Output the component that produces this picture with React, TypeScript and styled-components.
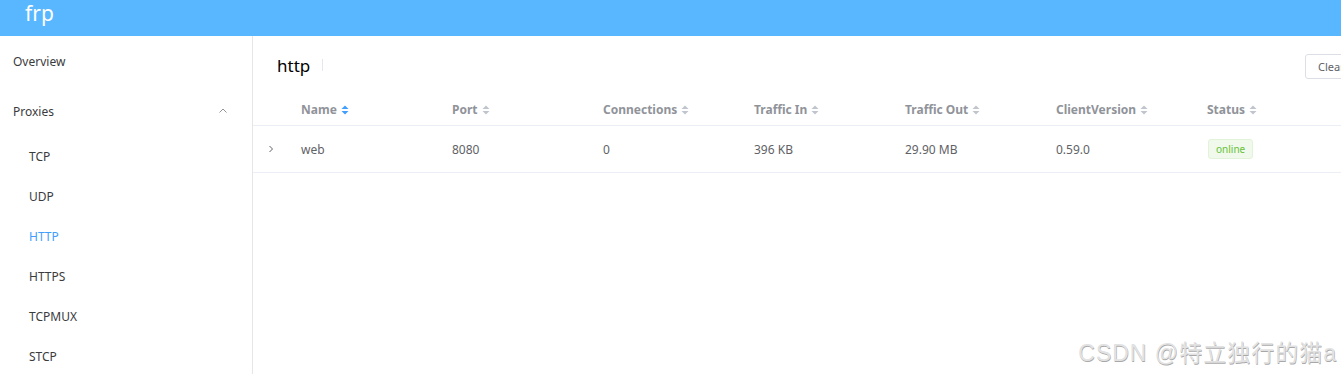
import React from 'react';
import styled, { createGlobalStyle } from 'styled-components';

const GlobalStyle = createGlobalStyle`
  html, body {
    margin: 0;
    padding: 0;
    background: #fff;
    font-family: 'Noto Sans', 'Noto Sans CJK SC', sans-serif;
    overflow: hidden;
  }
`;

const proxies = ['TCP', 'UDP', 'HTTP', 'HTTPS', 'TCPMUX', 'STCP'];

const columns = ['Name', 'Port', 'Connections', 'Traffic In', 'Traffic Out', 'ClientVersion', 'Status'];

const rows = [
  { name: 'web', port: '8080', conns: '0', trafficIn: '396 KB', trafficOut: '29.90 MB', version: '0.59.0', status: 'online' },
];

const SortIcon: React.FC<{ active?: boolean }> = ({ active }) => (
  <SortSvg width="8" height="10" viewBox="0 0 8 10">
    <path d="M4 0.5 L7.5 4 H0.5 Z" fill={active ? '#409eff' : '#c0c4cc'} />
    <path d="M4 9.5 L7.5 6 H0.5 Z" fill={active ? '#409eff' : '#c0c4cc'} />
  </SortSvg>
);

const App: React.FC = () => {
  return (
    <>
      <GlobalStyle />
      <Page>
        <Header>
          <Brand>frp</Brand>
        </Header>
        <Body>
          <Sidebar>
            <MenuItem>Overview</MenuItem>
            <MenuItem>
              Proxies
              <svg width="10" height="10" viewBox="0 0 10 10">
                <path d="M1.5 6.5 L5 3 L8.5 6.5" stroke="#909399" strokeWidth="1" fill="none" />
              </svg>
            </MenuItem>
            {proxies.map((p) => (
              <SubItem key={p} $active={p === 'HTTP'}>
                {p}
              </SubItem>
            ))}
          </Sidebar>
          <Main>
            <TopBar>
              <Title>http</Title>
              <Divider />
              <Spacer />
              <ClearButton>Clear</ClearButton>
            </TopBar>
            <Table>
              <HeadRow>
                <ExpandCell />
                {columns.map((c, i) => (
                  <HeadCell key={c}>
                    {c}
                    <SortIcon active={i === 0} />
                  </HeadCell>
                ))}
              </HeadRow>
              {rows.map((r) => (
                <Row key={r.name}>
                  <ExpandCell>
                    <svg width="8" height="8" viewBox="0 0 8 8">
                      <path d="M2.5 1 L5.5 4 L2.5 7" stroke="#606266" strokeWidth="1" fill="none" />
                    </svg>
                  </ExpandCell>
                  <Cell>{r.name}</Cell>
                  <Cell>{r.port}</Cell>
                  <Cell>{r.conns}</Cell>
                  <Cell>{r.trafficIn}</Cell>
                  <Cell>{r.trafficOut}</Cell>
                  <Cell>{r.version}</Cell>
                  <Cell>
                    <Tag>{r.status}</Tag>
                  </Cell>
                </Row>
              ))}
            </Table>
          </Main>
        </Body>
        <Watermark>CSDN @特立独行的猫a</Watermark>
      </Page>
    </>
  );
};

const Page = styled.div`
  position: relative;
  width: 1341px;
  height: 374px;
  overflow: hidden;
`;

const Header = styled.header`
  height: 36px;
  box-sizing: border-box;
  background: #58b7ff;
  display: flex;
  align-items: flex-start;
  padding: 1px 0 0 25px;
`;

const Brand = styled.div`
  color: #fff;
  font-size: 21px;
  line-height: 24px;
`;

const Body = styled.div`
  display: flex;
  height: 338px;
`;

const Sidebar = styled.nav`
  width: 252px;
  flex-shrink: 0;
  border-right: 1px solid #e6e6e6;
`;

const MenuItem = styled.div`
  height: 50px;
  display: flex;
  align-items: center;
  justify-content: space-between;
  padding: 0 24px 0 13px;
  font-size: 12px;
  color: #3a3b3d;
`;

const SubItem = styled.div<{ $active?: boolean }>`
  height: 40px;
  display: flex;
  align-items: center;
  padding-left: 29px;
  font-size: 12px;
  color: ${(p) => (p.$active ? '#409eff' : '#3a3b3d')};
`;

const Main = styled.main`
  flex: 1;
  min-width: 0;
`;

const TopBar = styled.div`
  display: flex;
  align-items: center;
  height: 58px;
  padding-left: 24px;
`;

const Title = styled.div`
  font-size: 17px;
  color: #000;
`;

const Divider = styled.div`
  width: 1px;
  height: 12px;
  background: #e4e7ed;
  margin-left: 12px;
`;

const Spacer = styled.div`
  flex: 1;
`;

const ClearButton = styled.button`
  width: 60px;
  height: 25px;
  margin-right: -24px;
  margin-top: 2px;
  border: 1px solid #dcdfe6;
  border-radius: 3px;
  background: #fff;
  color: #606266;
  font-family: inherit;
  font-size: 11px;
  text-align: left;
  padding-left: 12px;
`;

const Table = styled.div`
  display: flex;
  flex-direction: column;
`;

const HeadRow = styled.div`
  display: flex;
  align-items: center;
  height: 31px;
  border-bottom: 1px solid #ebeef5;
`;

const Row = styled.div`
  display: flex;
  align-items: center;
  height: 46px;
  border-bottom: 1px solid #ebeef5;
`;

const ExpandCell = styled.div`
  width: 48px;
  flex-shrink: 0;
  display: flex;
  padding-left: 14px;
  box-sizing: border-box;
`;

const HeadCell = styled.div`
  width: 151px;
  flex-shrink: 0;
  display: flex;
  align-items: center;
  gap: 4px;
  font-size: 12px;
  font-weight: 700;
  color: #909399;
`;

const SortSvg = styled.svg`
  display: block;
`;

const Cell = styled.div`
  width: 151px;
  flex-shrink: 0;
  font-size: 12px;
  color: #606266;
`;

const Tag = styled.span`
  display: inline-block;
  margin-left: 1px;
  padding: 2px 7px;
  font-size: 10px;
  color: #67c23a;
  background: #f0f9eb;
  border: 1px solid #e1f3d8;
  border-radius: 3px;
`;

const Watermark = styled.div`
  position: absolute;
  right: 4px;
  bottom: 6px;
  font-family: 'Liberation Sans', 'Noto Sans CJK SC', sans-serif;
  font-size: 23px;
  font-weight: 400;
  letter-spacing: 1px;
  color: #e2e2e2;
  text-shadow: 0.5px 0.5px 0.5px #a8a8a8;
  pointer-events: none;
`;

export default App;
